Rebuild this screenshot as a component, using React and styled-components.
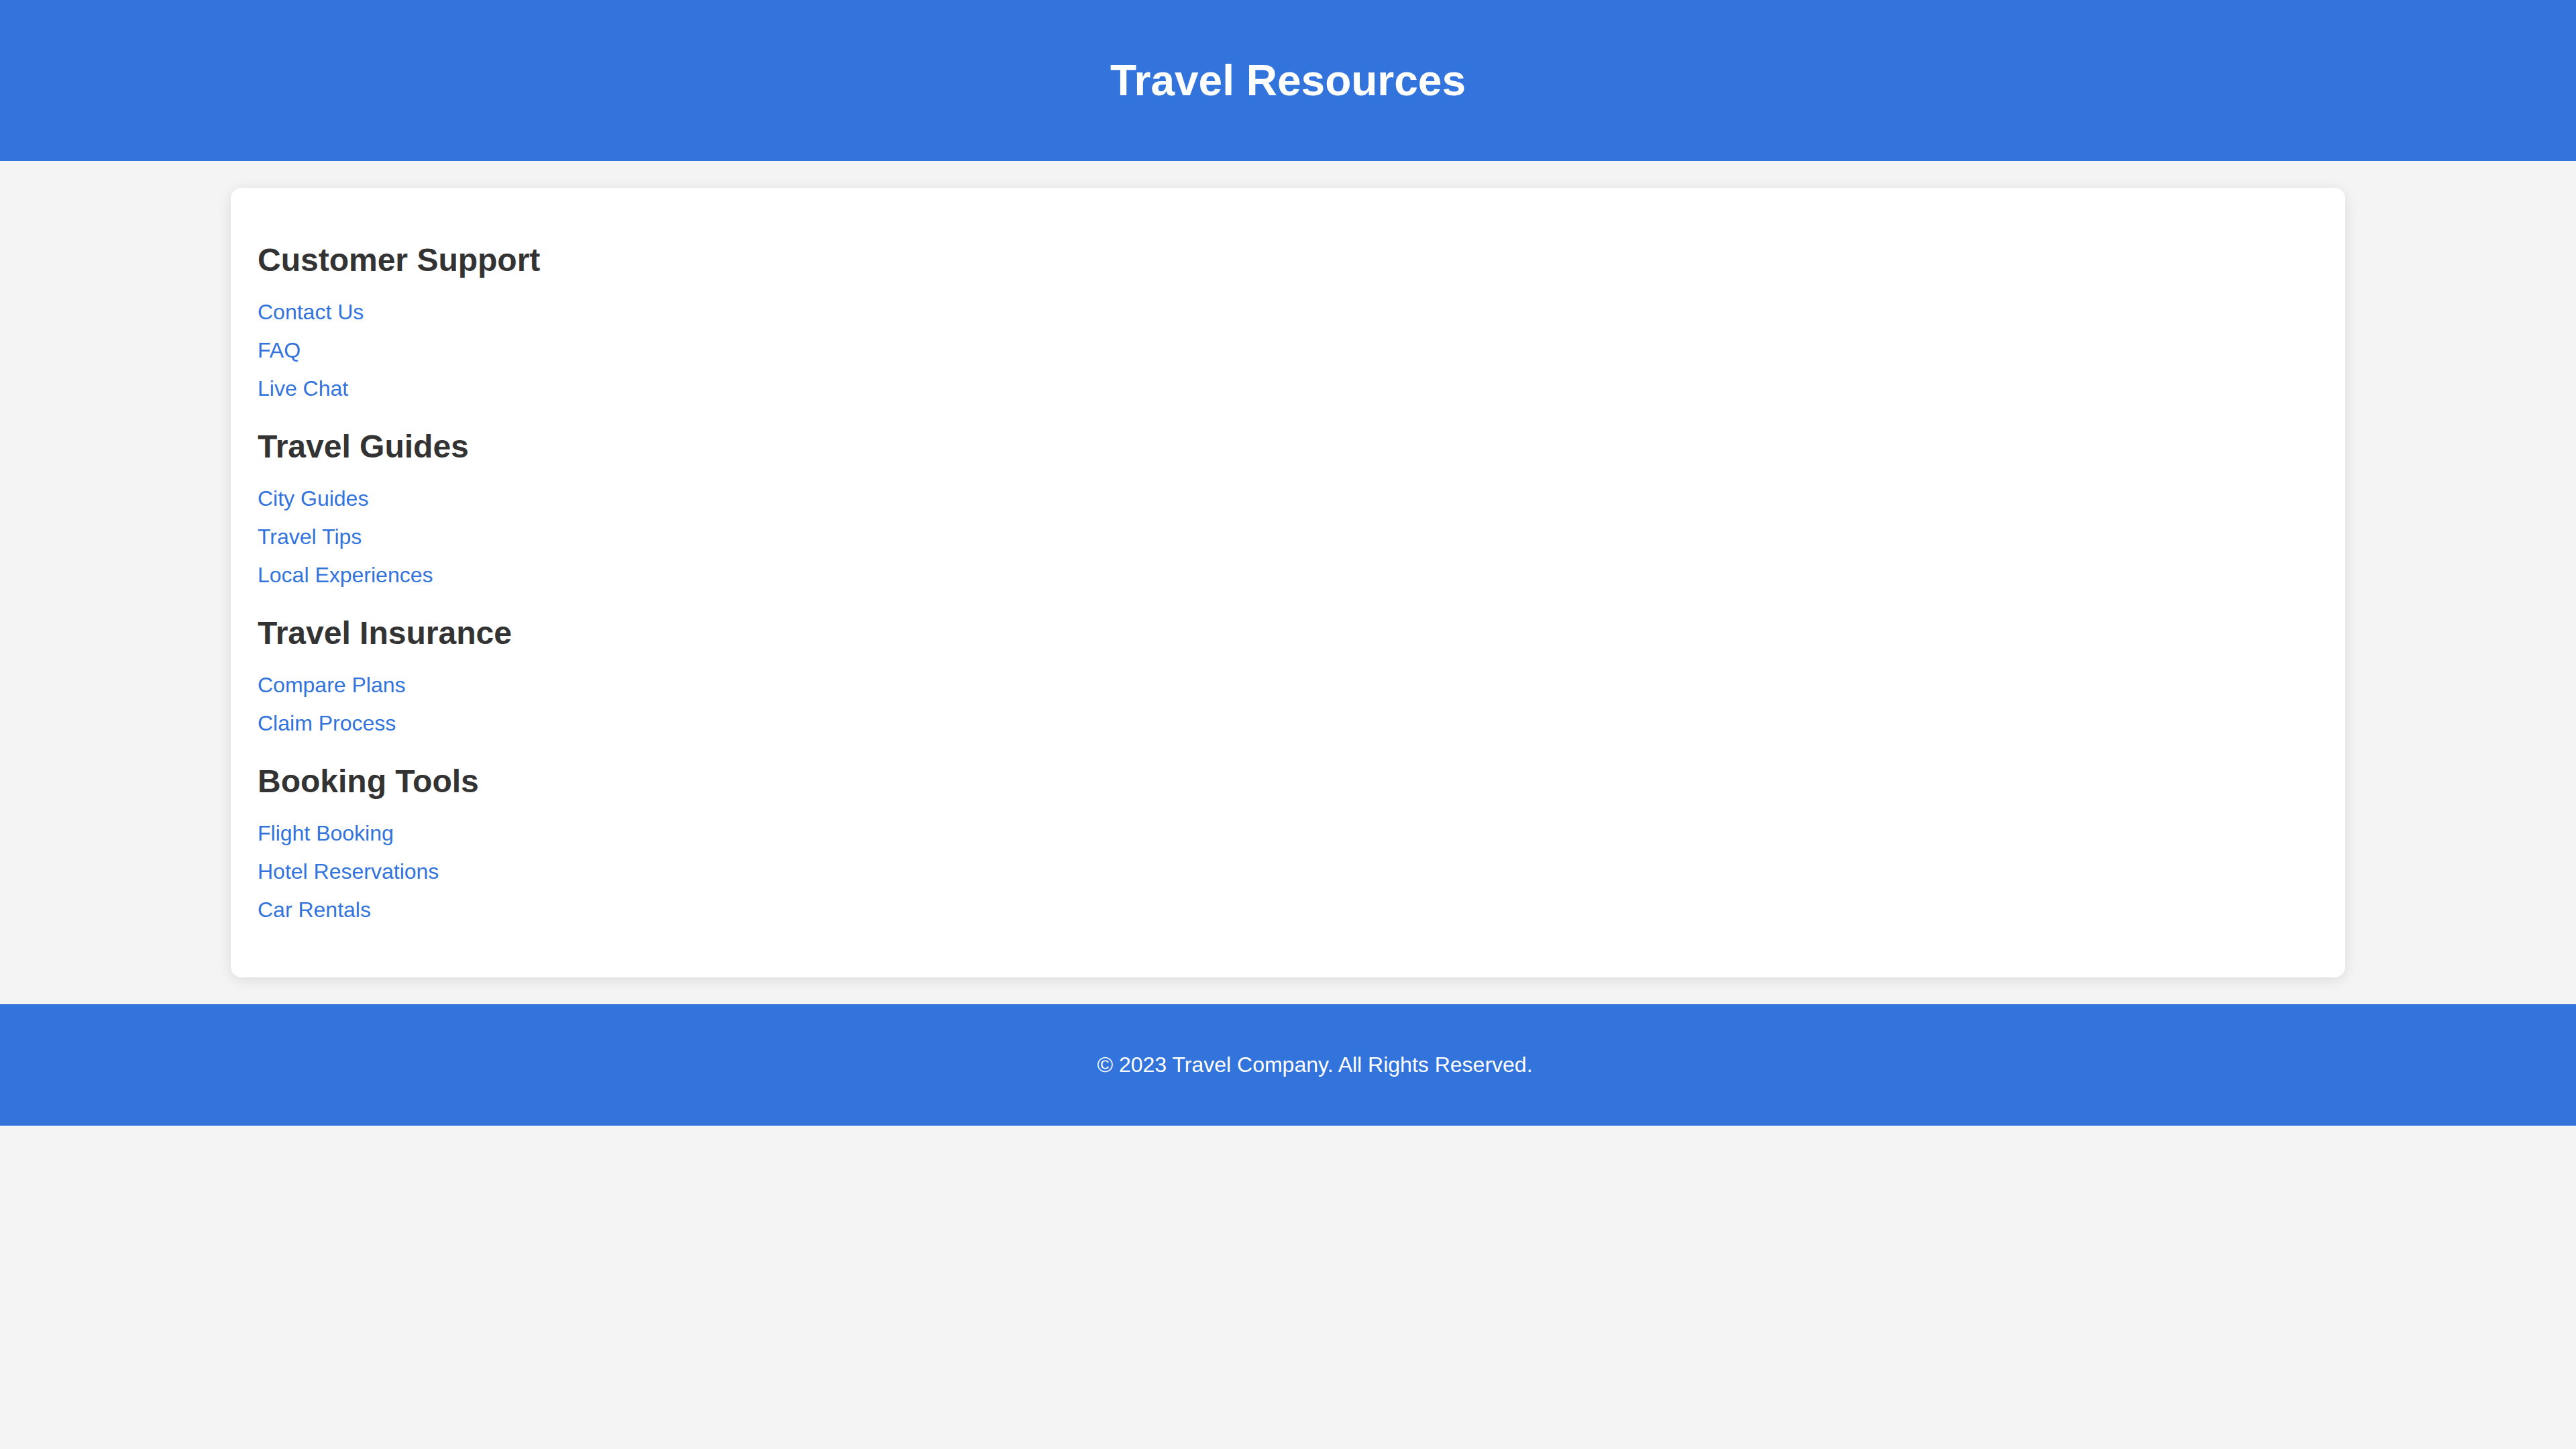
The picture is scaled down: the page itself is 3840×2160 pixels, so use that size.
import React from "react";
import styled, { createGlobalStyle } from "styled-components";

const GlobalStyle = createGlobalStyle`
  html, body {
    margin: 0;
    padding: 0;
    background: #f4f4f4;
    font-family: "Liberation Sans", Arial, sans-serif;
    color: #333333;
    font-size: 32px;
  }
`;

const Header = styled.header`
  background: #3273dc;
  color: #ffffff;
  padding: 40px;
  text-align: center;
`;

const Title = styled.h1`
  margin: 42.88px 0;
  font-size: 64px;
  font-weight: bold;
`;

const Main = styled.main`
  padding: 40px 0;
`;

const Card = styled.div`
  width: 80%;
  margin: 0 auto;
  padding: 40px 40px 42px;
  background: #ffffff;
  border-radius: 16px;
  box-shadow: 0 4px 20px rgba(0, 0, 0, 0.1);
`;

const Section = styled.section`
  margin-bottom: 40px;
`;

const SectionTitle = styled.h2`
  margin: 39.84px 0 32px;
  font-size: 48px;
  font-weight: bold;
  color: #333333;
`;

const LinkList = styled.ul`
  list-style: none;
  margin: 0;
  padding: 0;
`;

const LinkItem = styled.li`
  margin-bottom: 20px;
`;

const Link = styled.a`
  color: #3273dc;
  text-decoration: none;
  font-size: 32px;
`;

const Footer = styled.footer`
  background: #3273dc;
  color: #ffffff;
  padding: 40px 0 40px 80px;
  text-align: center;
`;

const FooterText = styled.p`
  margin: 32px 0;
  font-size: 32px;
`;

const sections = [
  { title: "Customer Support", links: ["Contact Us", "FAQ", "Live Chat"] },
  { title: "Travel Guides", links: ["City Guides", "Travel Tips", "Local Experiences"] },
  { title: "Travel Insurance", links: ["Compare Plans", "Claim Process"] },
  { title: "Booking Tools", links: ["Flight Booking", "Hotel Reservations", "Car Rentals"] },
];

export default function App() {
  return (
    <>
      <GlobalStyle />
      <Header>
        <Title>Travel Resources</Title>
      </Header>
      <Main>
        <Card>
          {sections.map((s) => (
            <Section key={s.title}>
              <SectionTitle>{s.title}</SectionTitle>
              <LinkList>
                {s.links.map((l) => (
                  <LinkItem key={l}>
                    <Link href="#">{l}</Link>
                  </LinkItem>
                ))}
              </LinkList>
            </Section>
          ))}
        </Card>
      </Main>
      <Footer>
        <FooterText>© 2023 Travel Company. All Rights Reserved.</FooterText>
      </Footer>
    </>
  );
}
